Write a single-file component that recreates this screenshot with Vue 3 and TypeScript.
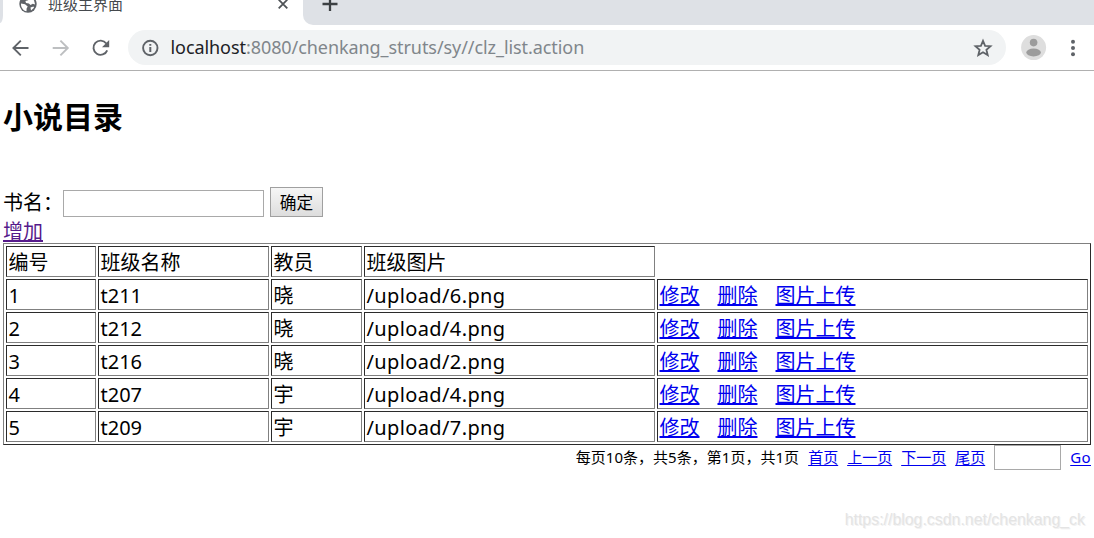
<script setup lang="ts">
interface ClassRow {
  id: number
  name: string
  teacher: string
  picture: string
}

const headers: string[] = ['编号', '班级名称', '教员', '班级图片']
const rows: ClassRow[] = [
  { id: 1, name: 't211', teacher: '晓', picture: '/upload/6.png' },
  { id: 2, name: 't212', teacher: '晓', picture: '/upload/4.png' },
  { id: 3, name: 't216', teacher: '晓', picture: '/upload/2.png' },
  { id: 4, name: 't207', teacher: '宇', picture: '/upload/4.png' },
  { id: 5, name: 't209', teacher: '宇', picture: '/upload/7.png' },
]
const actions: string[] = ['修改', '删除', '图片上传']
const pages: string[] = ['首页', '上一页', '下一页', '尾页']
</script>

<template>
  <div class="window">
    <header class="chrome">
      <div class="tabs">
        <div class="strip-left"></div>
        <div class="tab">
          <svg class="globe" width="18" height="18" viewBox="0 0 18 18">
            <circle cx="9" cy="9" r="8.7" fill="#5f6368" />
            <path d="M2 8.5 6 9.2 8.7 11.6 7.6 13.6 7.5 16.3C4.2 15.6 1.8 12.6 2 8.5ZM9.5 2 15 5.3 16.1 9.6 13.8 8.7 11.5 10.1 9.9 8.4 7 8 6.4 6.1 9.1 5.3ZM11.5 12.5 14.5 11.5 15 12.8 12 15.6Z" fill="#fff" />
          </svg>
          <span class="tab-title">班级主界面</span>
          <svg class="close" width="10" height="10" viewBox="0 0 10 10">
            <path d="M.7.7 9.3 9.3M9.3.7.7 9.3" stroke="#4f5357" stroke-width="1.8" />
          </svg>
        </div>
        <div class="strip-right">
          <svg width="16" height="16" viewBox="0 0 16 16">
            <path d="M8 1V15M.5 8H15.500" stroke="#3c4043" stroke-width="2.3" />
          </svg>
        </div>
      </div>
      <div class="toolbar">
        <svg class="nav" width="120" height="24" viewBox="0 0 120 24">
          <g fill="none" stroke-width="1.9">
            <path d="M28.500 12H14M20.800 4.600 13.400 12 20.800 19.400" stroke="#5f6368" />
            <path d="M53 12H67.500M60.700 4.600 68.100 12 60.700 19.400" stroke="#bdbfc1" transform="translate(-.300 0)" />
            <path d="M106.300 7.500A7.100 7.100 0 1 0 107.200 14.300" stroke="#5f6368" />
          </g>
          <path d="M109.200 4V11.200H102Z" fill="#5f6368" />
        </svg>
        <div class="address">
          <svg width="18" height="18" viewBox="0 0 18 18">
            <circle cx="9.300" cy="9" r="7.200" fill="none" stroke="#5f6368" stroke-width="1.900" />
            <path d="M8.300 8H10.300V13H8.300ZM8.300 5H10.300V6.800H8.300Z" fill="#5f6368" />
          </svg>
          <span class="url"><b>localhost</b>:8080/chenkang_struts/sy//clz_list.action</span>
          <svg class="star" width="20" height="20" viewBox="0 0 20 20">
            <path d="M10 2.800 12.100 7.800 17.500 8.200 13.400 11.800 14.700 17.100 10 14.300 5.300 17.100 6.600 11.800 2.500 8.200 7.900 7.800Z" fill="none" stroke="#5f6368" stroke-width="1.800" />
          </svg>
        </div>
        <svg class="avatar" width="26" height="26" viewBox="0 0 26 26">
          <circle cx="12.600" cy="12.600" r="12.500" fill="#dedede" />
          <circle cx="12.600" cy="7.600" r="3.800" fill="#9c9c9c" />
          <ellipse cx="12.600" cy="17.500" rx="7.300" ry="3.900" fill="#9c9c9c" />
        </svg>
        <svg class="more" width="6" height="18" viewBox="0 0 6 18">
          <g fill="#5f6368">
            <circle cx="3" cy="2.800" r="2" />
            <circle cx="3" cy="9" r="2" />
            <circle cx="3" cy="15.200" r="2" />
          </g>
        </svg>
      </div>
    </header>

    <main class="page">
      <h2>小说目录</h2>
      <form class="search" @submit.prevent>
        <label for="book">书名：</label>
        <input id="book" type="text" />
        <button type="submit">确定</button>
      </form>
      <div class="add"><a class="visited" href="#">增加</a></div>
      <table>
        <colgroup>
          <col class="c-id" /><col class="c-name" /><col class="c-teacher" /><col class="c-pic" /><col />
        </colgroup>
        <tbody>
          <tr>
            <td v-for="h in headers" :key="h">{{ h }}</td>
          </tr>
          <tr v-for="row in rows" :key="row.id">
            <td>{{ row.id }}</td>
            <td>{{ row.name }}</td>
            <td>{{ row.teacher }}</td>
            <td class="path">{{ row.picture }}</td>
            <td>
              <div class="actions"><a v-for="a in actions" :key="a" href="#">{{ a }}</a></div>
            </td>
          </tr>
        </tbody>
      </table>
      <div class="pager">
        <span class="summary">每页10条，共5条，第1页，共1页</span>
        <a v-for="p in pages" :key="p" href="#">{{ p }}</a>
        <input type="text" />
        <a class="go" href="#">Go</a>
      </div>
    </main>
    <div class="watermark">https://blog.csdn.net/chenkang_ck</div>
  </div>
</template>

<style>
body {
  margin: 0;
  overflow: hidden;
  background: #fff;
}
</style>

<style scoped>
.window {
  position: relative;
  width: 1094px;
  height: 538px;
  overflow: hidden;
  color: #000;
  font-family: "Noto Sans", "Noto Sans CJK SC", sans-serif;
}
svg {
  display: block;
  flex: none;
}
.chrome {
  height: 71px;
  box-sizing: border-box;
  border-bottom: 1px solid #b0b0b0;
}
.tabs {
  display: flex;
  height: 25px;
}
.strip-left {
  width: 3px;
  height: 23px;
  background: #dee1e6;
  border-bottom-right-radius: 3px 8px;
}
.tab {
  display: flex;
  width: 300px;
  height: 25px;
}
.globe {
  margin: -5px 0 0 16px;
}
.tab-title {
  margin: -8px 0 0 11px;
  width: 218px;
  color: #45494d;
  font-size: 15px;
  line-height: 24px;
}
.close {
  margin-top: -1px;
  margin-left: 12px;
}
.strip-right {
  flex: 1;
  background: #dee1e6;
  border-bottom-left-radius: 10px;
}
.strip-right svg {
  margin: -4px 0 0 19px;
}
.toolbar {
  display: flex;
  align-items: center;
  height: 45px;
}
.nav {
  margin-right: 8px;
}
.address {
  display: flex;
  align-items: center;
  box-sizing: border-box;
  width: 878px;
  height: 35px;
  padding: 0 13px;
  border-radius: 18px;
  background: #f1f3f4;
}
.url {
  margin: -2px 0 0 11.5px;
  font-size: 18px;
  line-height: 24px;
  letter-spacing: -0.07px;
  color: #80868b;
  white-space: nowrap;
}
.url b {
  font-weight: 400;
  color: #202124;
}
.star {
  margin-left: auto;
}
.avatar {
  margin-left: 15px;
}
.more {
  margin-left: 23px;
}
.page {
  padding: 0 3px;
  font-size: 20px;
}
h2 {
  margin: 26px 0 0;
  height: 41px;
  font-size: 30px;
  line-height: 40px;
}
.search {
  display: flex;
  height: 30px;
  margin-top: 49px;
}
label {
  width: 60px;
  line-height: 32px;
  white-space: nowrap;
}
input {
  box-sizing: border-box;
  padding: 0 4px;
  border: 1px solid #a9a9a9;
  border-radius: 0;
  background: #fff;
}
.search input {
  width: 201px;
  height: 27px;
  margin-top: 3px;
}
button {
  width: 53px;
  height: 30px;
  margin-left: 6px;
  padding: 0;
  border: 1px solid #a0a0a0;
  border-radius: 0;
  background: linear-gradient(#f6f6f6, #dddddd);
  color: #000;
  font: 16.7px/27px "Noto Sans CJK SC", sans-serif;
}
.add {
  height: 26px;
  line-height: 30px;
}
a {
  color: #0000ee;
  text-decoration: underline;
  text-decoration-thickness: 2px;
  text-decoration-skip-ink: none;
  text-underline-offset: 1px;
}
a.visited {
  color: #551a8b;
}
table {
  width: 1088px;
  height: 202px;
  table-layout: fixed;
  border-collapse: separate;
  border-spacing: 2px;
  border: 1px solid;
  border-color: #808080 #2b2b2b #2b2b2b #808080;
}
.c-id { width: 90px; }
.c-name { width: 171px; }
.c-teacher { width: 91px; }
.c-pic { width: 291px; }
td {
  box-sizing: border-box;
  height: 31px;
  padding: 2px 1px 0 1.5px;
  border: 1px solid;
  border-color: #2b2b2b #808080 #808080 #2b2b2b;
  line-height: 27px;
  white-space: nowrap;
}
.path {
  letter-spacing: 0.38px;
}
.actions {
  display: flex;
  gap: 18px;
}
.pager {
  display: flex;
  justify-content: flex-end;
  height: 25px;
  font-size: 15px;
  line-height: 25px;
}
.pager a {
  margin-left: 9px;
  text-decoration-thickness: 1px;
  text-underline-offset: 2px;
}
.pager input {
  width: 67px;
  height: 25px;
  margin-left: 9px;
}
.pager .summary {
  letter-spacing: 0.03px;
}
.pager .go {
  letter-spacing: 0.4px;
}
.watermark {
  position: absolute;
  right: 9px;
  bottom: 8px;
  color: #e4e4e4;
  font: 15.9px/20px "Liberation Sans", Arial, sans-serif;
  text-shadow: 1px 1px 0 #f2f2f2;
}
</style>
